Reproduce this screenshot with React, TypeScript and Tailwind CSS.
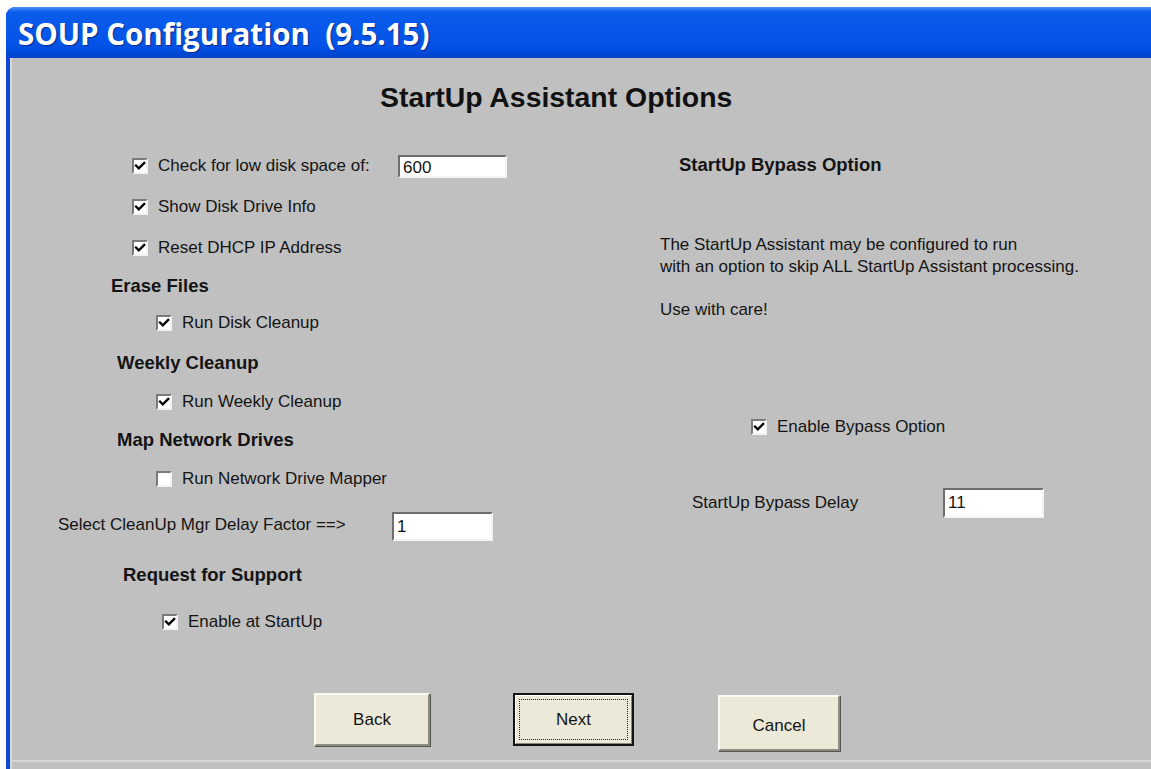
import React from "react";

type CheckProps = {
  checked?: boolean;
};

function CheckBox({ checked = true }: CheckProps) {
  return (
    <span className="flex h-[16px] w-[16px] shrink-0 items-center justify-center border-2 border-t-[#7a7a7a] border-l-[#7a7a7a] border-b-[#f2f2f2] border-r-[#f2f2f2] bg-white">
      {checked && (
        <svg viewBox="0 0 12 12" className="h-[12px] w-[12px]">
          <path
            d="M2 5.6 L4.8 8.4 L10.2 3"
            fill="none"
            stroke="#000"
            strokeWidth="2.3"
            strokeLinecap="square"
          />
        </svg>
      )}
    </span>
  );
}

function CheckRow({
  label,
  checked = true,
  className,
}: {
  label: string;
  checked?: boolean;
  className: string;
}) {
  return (
    <div className={`flex items-center gap-[10px] ${className}`}>
      <CheckBox checked={checked} />
      <span>{label}</span>
    </div>
  );
}

function Field({ value, className }: { value: string; className: string }) {
  return (
    <div
      className={`overflow-hidden border-2 border-t-[#6d6d6d] border-l-[#6d6d6d] border-b-[#f4f4f4] border-r-[#f4f4f4] bg-white pl-[3px] ${className}`}
    >
      {value}
    </div>
  );
}

function Heading({ text, className }: { text: string; className: string }) {
  return (
    <div className={`flex items-center text-[18.5px] font-bold ${className}`}>
      {text}
    </div>
  );
}

function Button({
  label,
  focused = false,
  className,
}: {
  label: string;
  focused?: boolean;
  className: string;
}) {
  if (focused) {
    return (
      <div className={`flex border-2 border-[#141414] bg-[#ece9d8] ${className}`}>
        <div className="flex flex-1 border border-t-white border-l-white border-b-[#8c8a7e] border-r-[#8c8a7e] p-[3px]">
          <div className="flex flex-1 items-center justify-center border border-dotted border-[#222]">
            {label}
          </div>
        </div>
      </div>
    );
  }
  return (
    <div
      className={`flex items-center justify-center border-2 border-t-[#fbfbf6] border-l-[#fbfbf6] border-b-[#8e8c80] border-r-[#8e8c80] bg-[#ece9d8] shadow-[1px_1px_0_#55554f] ${className}`}
    >
      {label}
    </div>
  );
}

export default function App() {
  return (
    <div className="h-[769px] w-[1151px] overflow-hidden bg-white pl-[6px] pt-[7px]">
      <div className="flex h-[762px] flex-col overflow-hidden rounded-tl-[9px] bg-[#0f47d6]">
        {/* title bar */}
        <div className="flex h-[51px] shrink-0 items-center bg-[linear-gradient(180deg,#4a90f6_0%,#0a5ceb_10%,#0353e8_75%,#0042cc_100%)] pl-[12px] pt-[3px]">
          <span className="whitespace-pre font-['Open_Sans',sans-serif] text-[29.5px] font-bold leading-[40px] text-white [text-shadow:1px_1px_1px_#0a2a8a]">
            SOUP Configuration  (9.5.15)
          </span>
        </div>

        <div className="ml-[4px] flex flex-1 flex-col bg-[#c0c0c0] font-['Liberation_Sans',Arial,sans-serif] text-[17px] text-[#141414] shadow-[inset_2px_0_0_#d8d8dc]">
          <div className="h-[88px] shrink-0 pl-[370px] pt-[23px] text-[28.4px] font-bold leading-[32px] text-[#111]">
            StartUp Assistant Options
          </div>

          <div className="flex">
            {/* left column */}
            <div className="flex w-[540px] shrink-0 flex-col">
              <div className="flex h-[40px] items-center gap-[10px] pl-[122px]">
                <CheckBox />
                <span className="w-[230px]">Check for low disk space of:</span>
                <Field
                  value="600"
                  className="h-[23px] w-[109px] pt-[3px] leading-[16px]"
                />
              </div>
              <CheckRow label="Show Disk Drive Info" className="h-[42px] pl-[122px]" />
              <CheckRow label="Reset DHCP IP Address" className="h-[40px] pl-[122px]" />
              <Heading text="Erase Files" className="h-[35px] pl-[101px]" />
              <CheckRow label="Run Disk Cleanup" className="h-[39px] pl-[146px]" />
              <Heading text="Weekly Cleanup" className="h-[41px] pl-[107px]" />
              <CheckRow label="Run Weekly Cleanup" className="h-[38px] pl-[146px]" />
              <Heading text="Map Network Drives" className="h-[38px] pl-[107px]" />
              <CheckRow
                label="Run Network Drive Mapper"
                checked={false}
                className="h-[40px] pl-[146px]"
              />
              <div className="flex h-[52px] items-center pl-[48px]">
                <span className="w-[334px]">Select CleanUp Mgr Delay Factor ==&gt;</span>
                <Field value="1" className="mt-[3px] h-[29px] w-[101px] leading-[25px]" />
              </div>
              <Heading text="Request for Support" className="h-[48px] pl-[113px]" />
              <CheckRow label="Enable at StartUp" className="h-[46px] pl-[152px]" />
            </div>

            {/* right column */}
            <div className="flex flex-1 flex-col">
              <Heading text="StartUp Bypass Option" className="h-[38px] pl-[129px]" />
              <p className="mt-[50px] pl-[110px] leading-[21.5px]">
                The StartUp Assistant may be configured to run
                <br />
                with an option to skip ALL StartUp Assistant processing.
                <br />
                <br />
                Use with care!
              </p>
              <CheckRow label="Enable Bypass Option" className="mt-[96px] h-[22px] pl-[201px]" />
              <div className="mt-[50px] flex h-[30px] items-center pl-[142px]">
                <span className="w-[251px]">StartUp Bypass Delay</span>
                <Field value="11" className="h-[30px] w-[101px] leading-[26px]" />
              </div>
            </div>
          </div>

          <div className="mt-[48px] flex items-start pl-[304px]">
            <Button label="Back" className="h-[53px] w-[116px]" />
            <Button label="Next" focused className="ml-[83px] h-[53px] w-[121px]" />
            <Button label="Cancel" className="ml-[84px] mt-[2px] h-[56px] w-[122px] pt-[6px]" />
          </div>
          <div className="mt-[9px] h-[2px] bg-[#d6d6d6]" />
        </div>
      </div>
    </div>
  );
}
